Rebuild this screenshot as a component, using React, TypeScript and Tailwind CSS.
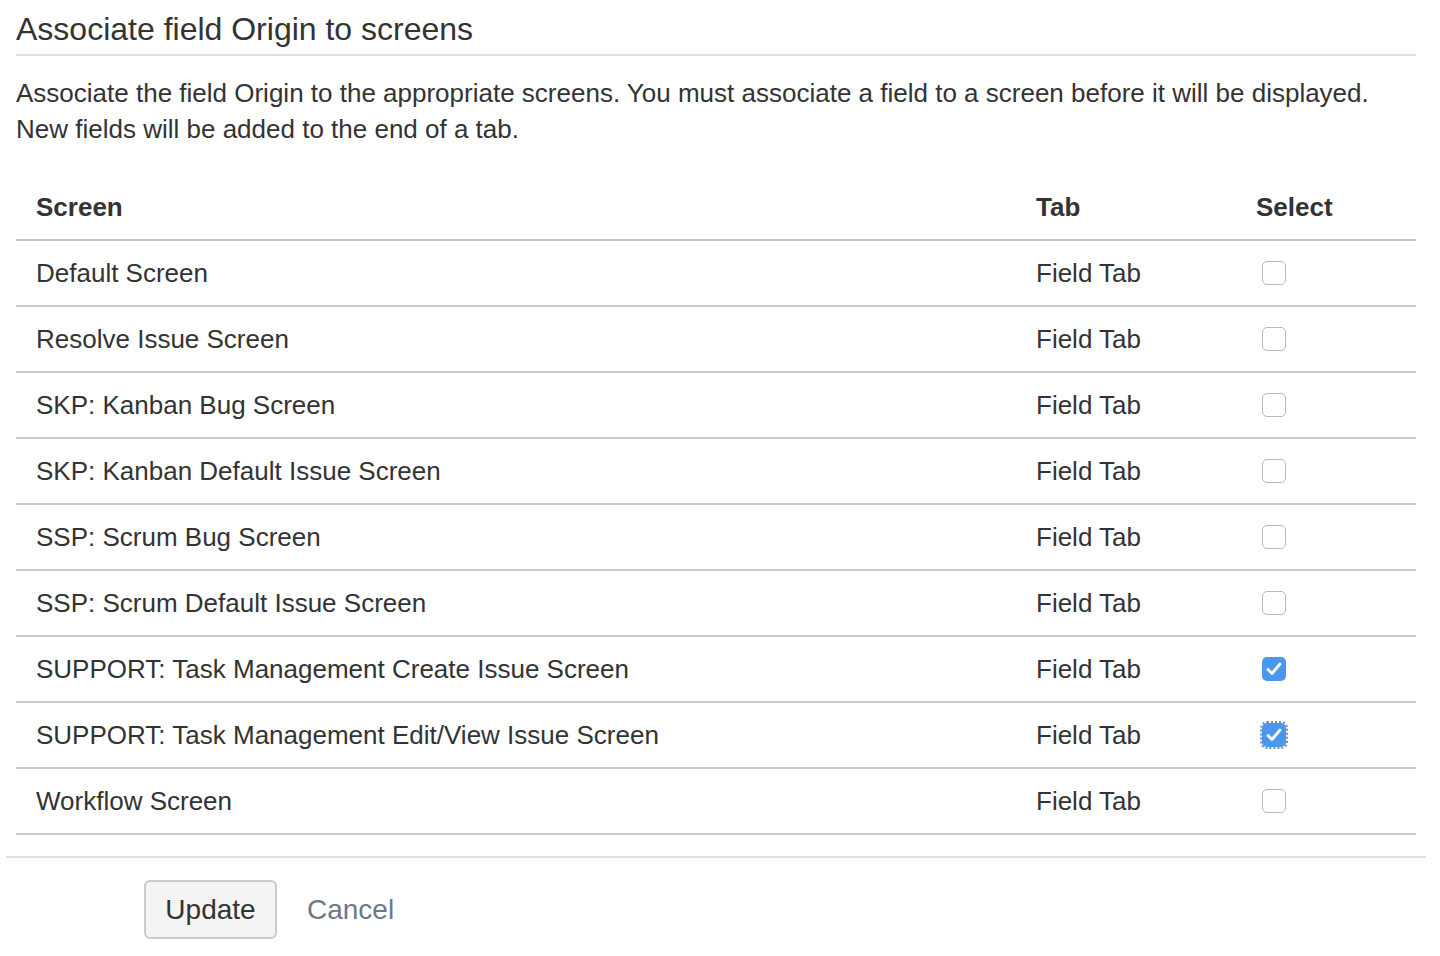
import React, { useState } from 'react'

const screens = [
  { name: 'Default Screen', checked: false },
  { name: 'Resolve Issue Screen', checked: false },
  { name: 'SKP: Kanban Bug Screen', checked: false },
  { name: 'SKP: Kanban Default Issue Screen', checked: false },
  { name: 'SSP: Scrum Bug Screen', checked: false },
  { name: 'SSP: Scrum Default Issue Screen', checked: false },
  { name: 'SUPPORT: Task Management Create Issue Screen', checked: true },
  { name: 'SUPPORT: Task Management Edit/View Issue Screen', checked: true, focused: true },
  { name: 'Workflow Screen', checked: false },
]

function Checkbox({ checked, focused, onToggle }: { checked: boolean; focused?: boolean; onToggle: () => void }) {
  return (
    <button
      type="button"
      onClick={onToggle}
      className={
        'w-[24px] h-[24px] rounded-[5px] flex items-center justify-center ' +
        (checked ? 'bg-[#4a97ee] ' : 'bg-white border border-[#b9b9b9] ') +
        (focused ? 'outline-2 outline-dotted outline-[#7b8ea6] outline-offset-0' : '')
      }
    >
      {checked && (
        <svg width="24" height="24" viewBox="0 0 24 24" fill="none">
          <path d="M6 12.5 L10 16.5 L18 7" stroke="white" strokeWidth="2.8" strokeLinecap="round" strokeLinejoin="round" />
        </svg>
      )}
    </button>
  )
}

export default function App() {
  const [rows, setRows] = useState(screens)

  const toggle = (i: number) => {
    setRows(rows.map((r, j) => (j === i ? { ...r, checked: !r.checked } : r)))
  }

  return (
    <div className="min-h-[956px] bg-white text-[#333] font-['Liberation_Sans',Arial,sans-serif]">
      <div className="w-[1420px] ml-[6px]">
        <div className="px-[10px]">
          <h2 className="text-[32px] leading-[40px] pt-[9px] pb-[5px] border-b-2 border-[#dedede]">
            Associate field Origin to screens
          </h2>
          <p className="mt-[19px] text-[26px] leading-[36px]">
            Associate the field Origin to the appropriate screens. You must associate a field to a screen before it will be displayed.
            <br />
            New fields will be added to the end of a tab.
          </p>

          <div className="mt-[28px] text-[26px]">
            <div className="grid grid-cols-[1000px_220px_180px] h-[66px] items-center border-b-2 border-[#c6c6c6] font-bold">
              <div className="pl-[20px]">Screen</div>
              <div className="pl-[20px]">Tab</div>
              <div className="pl-[20px]">Select</div>
            </div>
            {rows.map((r, i) => (
              <div
                key={r.name}
                className="grid grid-cols-[1000px_220px_180px] h-[66px] items-center border-b-2 border-[#cbcbcb]"
              >
                <div className="pl-[20px]">{r.name}</div>
                <div className="pl-[20px]">Field Tab</div>
                <div className="pl-[26px] flex items-center">
                  <Checkbox checked={r.checked} focused={r.focused} onToggle={() => toggle(i)} />
                </div>
              </div>
            ))}
          </div>
        </div>

        <div className="mt-[21px] border-t-2 border-[#e0e0e0] pt-[22px] pl-[138px] flex items-center gap-[30px]">
          <button
            type="button"
            className="w-[133px] h-[59px] rounded-[6px] border-2 border-[#cbcbcb] bg-[#f4f4f4] text-[28px] text-[#333]"
          >
            Update
          </button>
          <a href="#" className="text-[28px] text-[#6d7786]">
            Cancel
          </a>
        </div>
      </div>
    </div>
  )
}
